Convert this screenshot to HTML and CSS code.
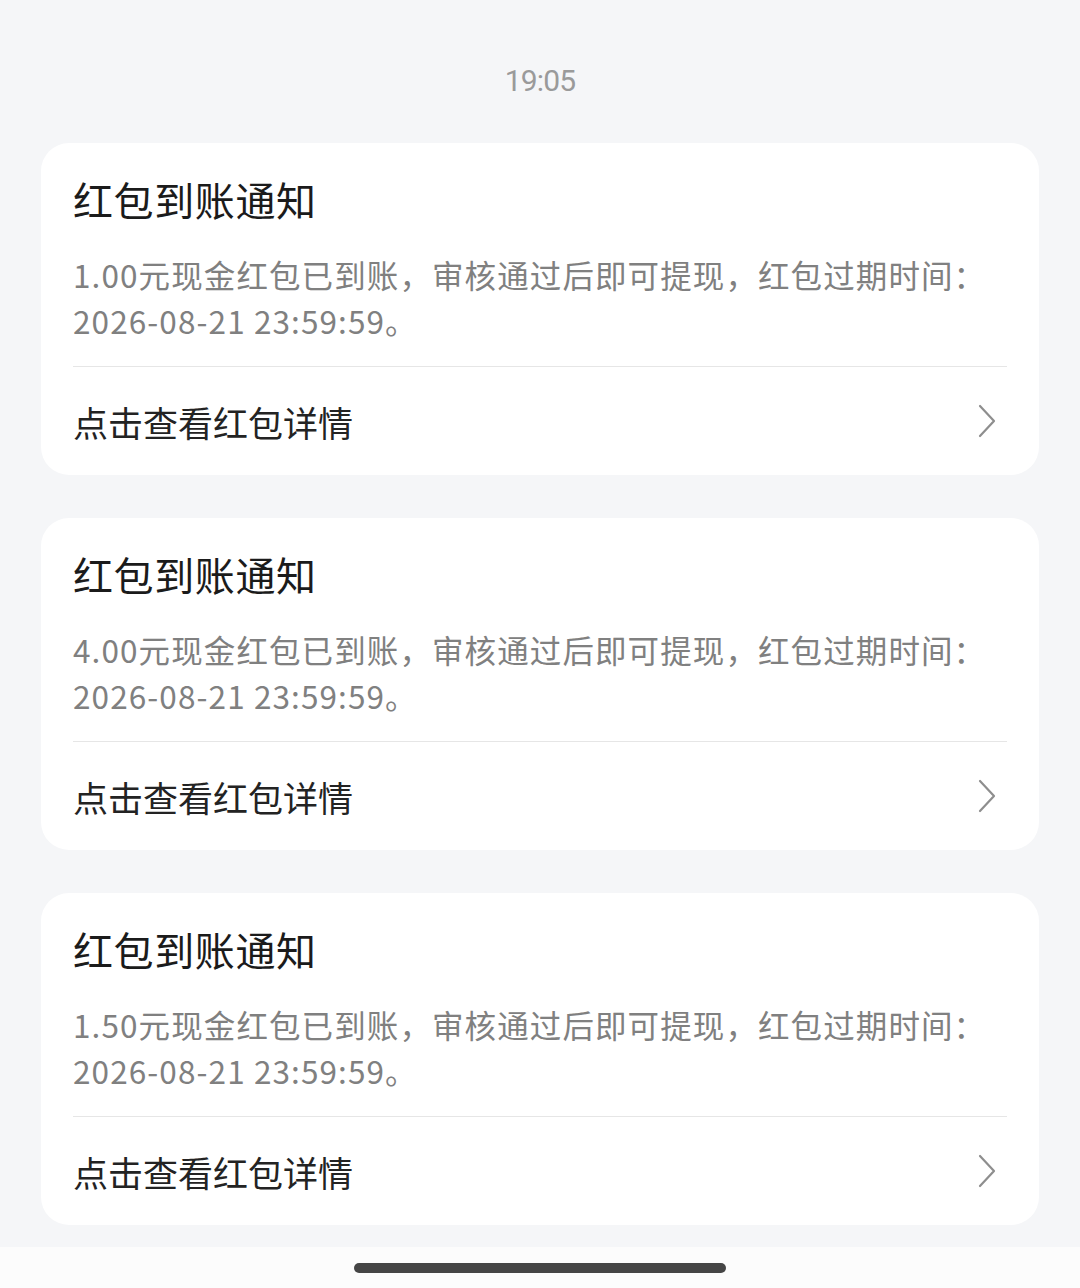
FILE: index.html
```html
<!DOCTYPE html>
<html lang="zh-CN">
<head>
<meta charset="utf-8">
<title>红包到账通知</title>
<link rel="stylesheet" href="styles.css">
</head>
<body>
<div class="page">
  <div class="time">19:05</div>
  <div class="list">
    <div class="card">
      <div class="title">红包到账通知</div>
      <div class="desc">1.00元现金红包已到账，审核通过后即可提现，红包过期时间：2026-08-21 23:59:59。</div>
      <div class="divider"></div>
      <div class="row">
        <span class="link">点击查看红包详情</span>
        <svg class="chev" width="20" height="34" viewBox="0 0 20 34"><polyline points="3,2 17,17 3,32" fill="none" stroke="#8e8e8e" stroke-width="2.2" stroke-linecap="round" stroke-linejoin="round"/></svg>
      </div>
    </div>
    <div class="card">
      <div class="title">红包到账通知</div>
      <div class="desc">4.00元现金红包已到账，审核通过后即可提现，红包过期时间：2026-08-21 23:59:59。</div>
      <div class="divider"></div>
      <div class="row">
        <span class="link">点击查看红包详情</span>
        <svg class="chev" width="20" height="34" viewBox="0 0 20 34"><polyline points="3,2 17,17 3,32" fill="none" stroke="#8e8e8e" stroke-width="2.2" stroke-linecap="round" stroke-linejoin="round"/></svg>
      </div>
    </div>
    <div class="card">
      <div class="title">红包到账通知</div>
      <div class="desc">1.50元现金红包已到账，审核通过后即可提现，红包过期时间：2026-08-21 23:59:59。</div>
      <div class="divider"></div>
      <div class="row">
        <span class="link">点击查看红包详情</span>
        <svg class="chev" width="20" height="34" viewBox="0 0 20 34"><polyline points="3,2 17,17 3,32" fill="none" stroke="#8e8e8e" stroke-width="2.2" stroke-linecap="round" stroke-linejoin="round"/></svg>
      </div>
    </div>
  </div>
  <div class="navbar"><div class="handle"></div></div>
</div>
</body>
</html>
```
FILE: styles.css
```css
html, body {
  margin: 0;
  padding: 0;
  background: #f5f6f8;
}
body {
  font-family: "Noto Sans CJK SC", "Noto Sans", sans-serif;
  width: 1080px;
  height: 1288px;
  overflow: hidden;
}
.page {
  display: flex;
  flex-direction: column;
  height: 1288px;
}
.time {
  padding-top: 61px;
  height: 40px;
  line-height: 40px;
  text-align: center;
  font-family: Roboto, "Noto Sans", sans-serif;
  font-size: 30px;
  color: #9a9a9a;
  letter-spacing: -0.8px;
}
.list {
  margin-top: 42px;
  display: flex;
  flex-direction: column;
  gap: 43px;
  padding: 0 41px;
}
.card {
  background: #ffffff;
  border-radius: 28px;
  padding: 28px 32px 0 32px;
  height: 304px;
}
.title {
  font-size: 40px;
  line-height: 56px;
  color: #1b1b1b;
  letter-spacing: 0.6px;
}
.desc {
  margin-top: 24px;
  font-size: 31.5px;
  line-height: 46px;
  color: #808080;
  letter-spacing: 1.1px;
}
.divider {
  margin-top: 23px;
  height: 1px;
  background: #e6e6e6;
}
.row {
  height: 108px;
  display: flex;
  align-items: center;
  justify-content: space-between;
}
.link {
  font-size: 35px;
  color: #232323;
}
.chev {
  margin-right: 10px;
}
.navbar {
  margin-top: auto;
  height: 41px;
  background: #fcfcfc;
  display: flex;
  justify-content: center;
  padding-top: 16px;
  box-sizing: border-box;
}
.handle {
  width: 372px;
  height: 10px;
  border-radius: 5px;
  background: #454545;
}
```
